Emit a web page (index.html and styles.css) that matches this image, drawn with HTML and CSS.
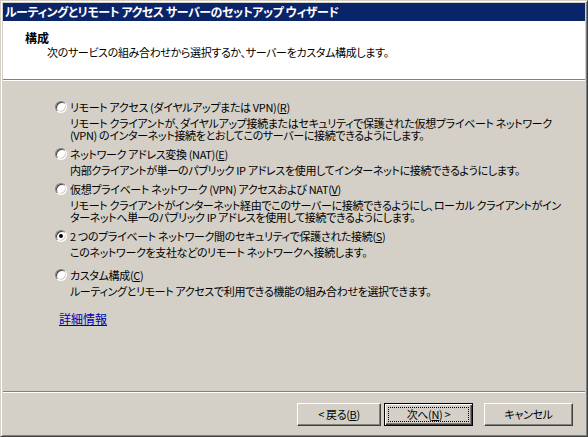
FILE: index.html
```html
<!DOCTYPE html>
<html lang="ja">
<head>
<meta charset="utf-8">
<title>ルーティングとリモート アクセス サーバーのセットアップ ウィザード</title>
<link rel="stylesheet" href="styles.css">
</head>
<body>
<div class="window">
  <div class="titlebar">ルーティングとリモート アクセス サーバーのセットアップ ウィザード</div>
  <div class="client">
    <div class="header">
      <div class="h-title">構成</div>
      <div class="h-sub">次のサービスの組み合わせから選択するか、サーバーをカスタム構成します。</div>
    </div>
    <div class="content">
      <div class="option">
        <span class="radio"></span>
        <div class="opt-body">
          <div class="label">リモート アクセス (ダイヤルアップまたは VPN)(<u>R</u>)</div>
          <div class="desc">リモート クライアントが、ダイヤルアップ接続またはセキュリティで保護された仮想プライベート ネットワーク<br>(VPN) のインターネット接続をとおしてこのサーバーに接続できるようにします。</div>
        </div>
      </div>
      <div class="option">
        <span class="radio"></span>
        <div class="opt-body">
          <div class="label">ネットワーク アドレス変換 (NAT)(<u>E</u>)</div>
          <div class="desc">内部クライアントが単一のパブリック IP アドレスを使用してインターネットに接続できるようにします。</div>
        </div>
      </div>
      <div class="option">
        <span class="radio"></span>
        <div class="opt-body">
          <div class="label">仮想プライベート ネットワーク (VPN) アクセスおよび NAT(<u>V</u>)</div>
          <div class="desc">リモート クライアントがインターネット経由でこのサーバーに接続できるようにし、ローカル クライアントがイン<br>ターネットへ単一のパブリック IP アドレスを使用して接続できるようにします。</div>
        </div>
      </div>
      <div class="option">
        <span class="radio checked"></span>
        <div class="opt-body">
          <div class="label">2 つのプライベート ネットワーク間のセキュリティで保護された接続(<u>S</u>)</div>
          <div class="desc">このネットワークを支社などのリモート ネットワークへ接続します。</div>
        </div>
      </div>
      <div class="option option-last">
        <span class="radio"></span>
        <div class="opt-body">
          <div class="label">カスタム構成(<u>C</u>)</div>
          <div class="desc">ルーティングとリモート アクセスで利用できる機能の組み合わせを選択できます。</div>
        </div>
      </div>
      <a class="more" href="#">詳細情報</a>
    </div>
    <div class="footer">
      <button class="btn btn-back">&lt; 戻る(<u>B</u>)</button>
      <button class="btn btn-next"><span class="focus">次へ(<u>N</u>) &gt;</span></button>
      <button class="btn btn-cancel">キャンセル</button>
    </div>
  </div>
</div>
</body>
</html>
```

FILE: styles.css
```css
* { box-sizing: border-box; }

html, body {
  margin: 0;
  padding: 0;
  width: 588px;
  height: 437px;
  overflow: hidden;
  background: #d4d0c8;
}

body {
  font-family: "Noto Sans CJK JP", "Noto Sans", sans-serif;
  font-size: 11px;
  letter-spacing: -0.35px;
  font-feature-settings: "palt";
  color: #000;
}

.window {
  width: 588px;
  height: 437px;
  display: flex;
  flex-direction: column;
  background: #d4d0c8;
  border: 1px solid;
  border-color: #d4d0c8 #404040 #404040 #d4d0c8;
  box-shadow: inset 1px 1px 0 #fff, inset -1px -1px 0 #808080;
  padding: 2px;
}

.titlebar {
  height: 18px;
  line-height: 18px;
  background: #0a246a;
  color: #fff;
  font-size: 12px;
  font-weight: bold;
  letter-spacing: -0.45px;
  padding-left: 2px;
  white-space: nowrap;
  overflow: hidden;
}

.client {
  flex: 1;
  display: flex;
  flex-direction: column;
  min-height: 0;
}

.header {
  height: 59px;
  background: #fff;
  border-bottom: 1px solid #808080;
  padding: 10px 0 0 22px;
}

.h-title {
  font-size: 12px;
  letter-spacing: 0;
  font-weight: bold;
  line-height: 14px;
}

.h-sub {
  margin-top: 1px;
  line-height: 12px;
  padding-left: 22px;
  white-space: nowrap;
}

.content {
  flex: 1;
  border-top: 1px solid #fff;
  padding: 18px 0 0 52px;
  display: flex;
  flex-direction: column;
}

.option {
  display: flex;
  gap: 3px;
  margin-bottom: 5px;
}

.option-last {
  margin-bottom: 0;
}

.option:nth-child(4) {
  margin-bottom: 9px;
}

.radio {
  flex: none;
  width: 12px;
  height: 12px;
  margin-top: 2px;
  border-radius: 50%;
  background: #fff;
  border: 1px solid;
  border-color: #808080 #fff #fff #808080;
  box-shadow: inset 1px 1px 0 #404040, inset -1px -1px 0 #d4d0c8;
  position: relative;
}

.radio.checked::after {
  content: "";
  position: absolute;
  left: 3px;
  top: 3px;
  width: 4px;
  height: 4px;
  border-radius: 50%;
  background: #000;
}

.opt-body {
  white-space: nowrap;
}

.label {
  line-height: 16px;
}

.desc {
  margin-top: 2px;
  line-height: 12px;
}

.more {
  align-self: flex-start;
  margin: 16px 0 0 4px;
  font-size: 12px;
  letter-spacing: 0;
  line-height: 12px;
  color: #0000b0;
  text-decoration: underline;
}

.footer {
  height: 43px;
  border-top: 1px solid #808080;
  box-shadow: inset 0 1px 0 #fff;
  padding: 11px 0 0 294px;
  display: flex;
  align-items: flex-start;
}

.btn {
  height: 23px;
  padding: 0;
  font: inherit;
  letter-spacing: inherit;
  color: #000;
  background: #d4d0c8;
  border: 1px solid;
  border-color: #fff #404040 #404040 #fff;
  box-shadow: inset -1px -1px 0 #808080;
  border-radius: 0;
  text-align: center;
  line-height: 19px;
}

.btn-back {
  width: 84px;
}

.btn-next {
  width: 89px;
  margin-left: 3px;
  border: 1px solid #000;
  box-shadow: inset 1px 1px 0 #fff, inset -1px -1px 0 #404040, inset -2px -2px 0 #808080;
  padding: 3px;
  display: flex;
}

.btn-next .focus {
  flex: 1;
  border: 1px dotted #000;
  line-height: 13px;
}

.btn-cancel {
  width: 89px;
  margin-left: 11px;
}
```
